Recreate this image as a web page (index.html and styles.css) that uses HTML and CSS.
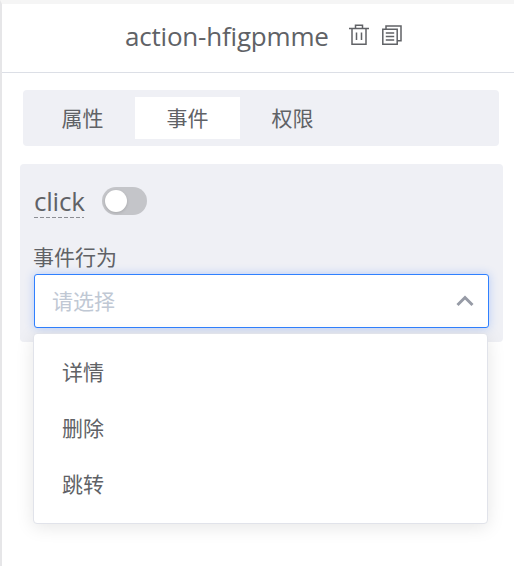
FILE: index.html
```html
<!DOCTYPE html>
<html lang="zh-CN">
<head>
<meta charset="utf-8">
<title>action-hfigpmme</title>
<link rel="stylesheet" href="styles.css">
</head>
<body>
<main class="panel">
  <header class="header">
    <span class="title">action-hfigpmme</span>
    <svg class="icon trash" width="22" height="22" viewBox="0 0 22 22"><path d="M1 4.5H21M7.5 4.5V1.3H14.5V4.5M4 4.5V20.2H18V4.5M8.5 8.5V16M13.5 8.5V16"/></svg>
    <svg class="icon" width="22" height="22" viewBox="0 0 22 22"><path d="M1.8 5.3H16.2V20.2H1.8ZM5 5V1.9H20V16.8H16.5M4.8 9H13.2M4.8 12.5H13.2M4.8 16H13.2"/></svg>
  </header>
  <nav class="tabs">
    <span class="tab">属性</span>
    <span class="tab active">事件</span>
    <span class="tab">权限</span>
  </nav>
  <section class="event">
    <div class="event-head">
      <span class="event-name"><span class="event-text">click</span><svg class="dashes" width="50" height="1"><path d="M0 .5H50"/></svg></span>
      <span class="switch"></span>
    </div>
    <div class="label">事件行为</div>
    <div class="select">
      <span class="placeholder">请选择</span>
      <svg class="arrow" width="18" height="12" viewBox="0 0 18 12"><path d="M1.5 10L9 2.5L16.5 10"/></svg>
      <ul class="menu">
        <li>详情</li>
        <li>删除</li>
        <li>跳转</li>
      </ul>
    </div>
  </section>
</main>
</body>
</html>
```
FILE: styles.css
```css
* { box-sizing: border-box; }
body {
  margin: 0;
  height: 566px;
  overflow: hidden;
  background: #fff;
  color: #606266;
  font-family: "Open Sans", "Noto Sans CJK SC", sans-serif;
  font-size: 21px;
}
.panel {
  height: 566px;
  border-top: 4px solid #f5f5f5;
  border-left: 2px solid #e6e6e8;
}
.header {
  display: flex;
  align-items: center;
  height: 69px;
  padding-left: 123px;
  border-bottom: 1px solid #dcdfe6;
}
.title {
  width: 223px;
  font-size: 26px;
  line-height: 36px;
  letter-spacing: -0.2px;
  padding-bottom: 5px;
}
.icon {
  flex: none;
  margin-bottom: 6px;
  fill: none;
  stroke: #606266;
  stroke-width: 1.5;
}
.trash { margin-right: 11px; }
.tabs {
  display: flex;
  width: 476px;
  height: 56px;
  margin: 17px 0 0 21px;
  padding: 7px;
  border-radius: 4px;
  background: #eff0f5;
}
.tab {
  width: 105px;
  height: 42px;
  line-height: 41px;
  text-align: center;
  font-family: "Noto Sans CJK SC", sans-serif;
}
.active { background: #fff; }
.event {
  width: 483px;
  height: 178px;
  margin: 18px 0 0 18px;
  padding: 21px 14px 0;
  border-radius: 4px;
  background: #eff0f5;
}
.event-head {
  display: flex;
  align-items: flex-start;
  height: 56px;
}
.event-name {
  display: flex;
  flex-direction: column;
  width: 50px;
  margin-right: 18px;
}
.event-text {
  height: 32px;
  line-height: 33px;
  font-size: 26px;
  letter-spacing: -0.2px;
  white-space: nowrap;
}
.dashes { stroke: #8c8e94; stroke-dasharray: 4 2; }
.switch {
  width: 45px;
  height: 28px;
  margin-top: 2px;
  padding: 3px;
  border-radius: 14px;
  background: #c4c5c9;
}
.switch::before {
  content: "";
  display: block;
  width: 22px;
  height: 22px;
  border-radius: 50%;
  background: #fff;
  box-shadow: 0 1px 3px rgba(0, 0, 0, .15);
}
.label {
  height: 33px;
  line-height: 31px;
  margin-left: -1px;
  font-family: "Noto Sans CJK SC", sans-serif;
}
.select {
  position: relative;
  display: flex;
  align-items: center;
  justify-content: space-between;
  height: 54px;
  padding: 0 14px 0 17px;
  border: 1px solid #2f80ff;
  border-radius: 3px;
  background: #fff;
  box-shadow: 0 0 10px rgba(64, 128, 255, .32);
  color: #c0c8d4;
  font-family: "Noto Sans CJK SC", sans-serif;
}
.placeholder { padding-bottom: 2px; }
.arrow { fill: none; stroke: #979ba6; stroke-width: 3; }
.menu {
  position: absolute;
  top: 58px;
  left: -2px;
  width: 455px;
  height: 191px;
  margin: 0;
  padding: 10px 0;
  list-style: none;
  border: 1px solid #e1e3ea;
  border-radius: 4px;
  background: #fff;
  box-shadow: 0 3px 18px rgba(0, 0, 0, .1);
  color: #606266;
}
.menu li {
  height: 56px;
  padding-left: 28px;
  line-height: 54px;
}
```
